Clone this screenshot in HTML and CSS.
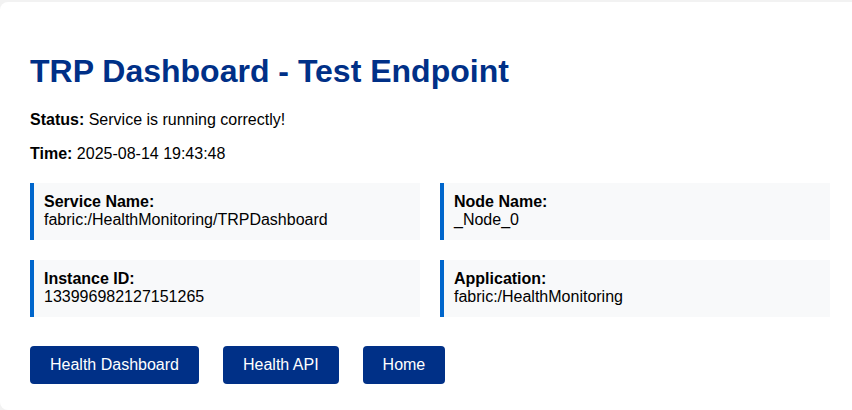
FILE: index.html
```html
<!DOCTYPE html>
<html lang="en">
<head>
<meta charset="utf-8">
<title>TRP Dashboard - Test Endpoint</title>
<link rel="stylesheet" href="styles.css">
</head>
<body>
<div class="container">
  <h1 class="title">TRP Dashboard - Test Endpoint</h1>
  <p class="line"><strong>Status:</strong> Service is running correctly!</p>
  <p class="line"><strong>Time:</strong> 2025-08-14 19:43:48</p>
  <div class="grid">
    <div class="card">
      <div class="label">Service Name:</div>
      <div class="value">fabric:/HealthMonitoring/TRPDashboard</div>
    </div>
    <div class="card">
      <div class="label">Node Name:</div>
      <div class="value">_Node_0</div>
    </div>
    <div class="card">
      <div class="label">Instance ID:</div>
      <div class="value">133996982127151265</div>
    </div>
    <div class="card">
      <div class="label">Application:</div>
      <div class="value">fabric:/HealthMonitoring</div>
    </div>
  </div>
  <div class="actions">
    <a class="btn" href="#">Health Dashboard</a>
    <a class="btn" href="#">Health API</a>
    <a class="btn" href="#">Home</a>
  </div>
</div>
</body>
</html>
```
FILE: styles.css
```css
html, body {
  overflow: hidden;
}
body {
  margin: 0;
  background: #f2f2f2;
  font-family: "Liberation Sans", Arial, sans-serif;
  font-size: 16px;
  color: #000;
}
.container {
  margin-top: 2px;
  width: 800px;
  padding: 30px 30px 26px 30px;
  background: #fff;
  border-radius: 8px;
}
.title {
  margin: 21px 0 21px 0;
  font-size: 32px;
  font-weight: bold;
  color: #003087;
}
.line {
  margin: 16px 0;
  line-height: 18px;
}
.grid {
  display: grid;
  grid-template-columns: 1fr 1fr;
  gap: 20px;
  margin: 20px 0 29px 0;
}
.card {
  background: #f8f9fa;
  border-left: 4px solid #0066cc;
  padding: 10px 10px 11px 10px;
  line-height: 18px;
}
.label {
  font-weight: bold;
}
.actions {
  display: flex;
  gap: 24px;
}
.btn {
  display: inline-block;
  background: #003087;
  color: #fff;
  text-decoration: none;
  padding: 10px 20px;
  line-height: 18px;
  border-radius: 4px;
}
```
